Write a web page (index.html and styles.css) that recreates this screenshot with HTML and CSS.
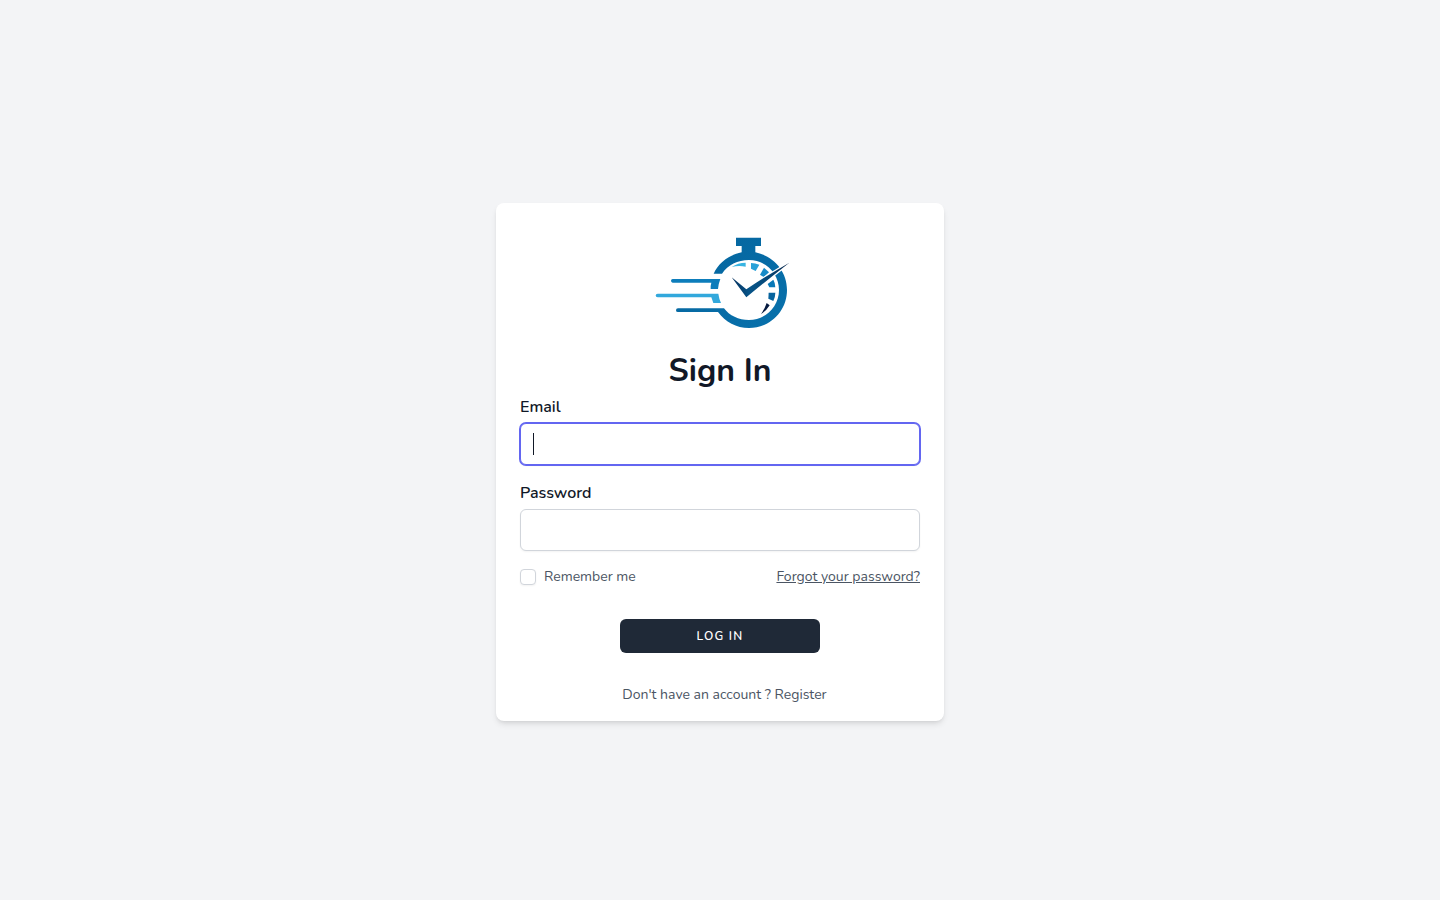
FILE: index.html
```html
<!DOCTYPE html>
<html lang="en">
<head>
<meta charset="utf-8">
<meta name="viewport" content="width=device-width, initial-scale=1">
<title>Sign In</title>
<link rel="stylesheet" href="styles.css">
</head>
<body>
<main class="page">
  <section class="card">
    <svg class="logo" viewBox="0 0 435 315" role="img" aria-label="Stopwatch logo">
      <defs>
        <linearGradient id="ring" x1="0" y1="0" x2="1" y2="1">
          <stop offset="0" stop-color="#04649d"/>
          <stop offset="1" stop-color="#0871ac"/>
        </linearGradient>
        <linearGradient id="check" x1="0" y1="0" x2="1" y2="0">
          <stop offset="0" stop-color="#062f5c"/>
          <stop offset=".3" stop-color="#075488"/>
          <stop offset=".65" stop-color="#064777"/>
          <stop offset="1" stop-color="#0b2447"/>
        </linearGradient>
      </defs>
      <path fill="url(#ring)" d="M258 23H333V48H316V67C371 78 411 124 411 180C411 244 360 294 297 294C259 294 226 276 204 246H84Q78 246 78 240.500Q78 235 84 235H222C238 257 266 270 297 270C346 270 387 230 387 180C387 130 346 90 297 90C263 90 234 105 216 131H191C206 98 237 75 275 67V48H258Z"/>
      <path fill="#0d7dbb" d="M68 147H211Q206 159 204 177H182Q181 168 184 158H68Q63 158 63 152.500Q63 147 68 147Z"/>
      <path fill="#32a8dc" d="M23 191H205Q207 206 213 219H190L184 202H23Q17 202 17 196.500Q17 191 23 191Z"/>
      <path fill="#38b4e2" d="M245 111Q264 98 287 98V110Q266 106 245 111Z"/>
      <path fill="#28a1d8" d="M303 99Q316 99 328 104L317 123L303 116Z"/>
      <path fill="#178bc8" d="M342 113L357 127L341 141L330 134Z"/>
      <path fill="#0878b7" d="M353 162L370 149Q376 159 376 172H358Z"/>
      <path fill="#07649e" d="M356 188H376Q376 201 370 213L355 206Z"/>
      <path fill="#061a40" d="M350 219L359 226Q349 243 333 252Q345 235 350 219Z"/>
      <path fill="none" stroke="#fff" stroke-width="9" d="M289 178Q350 139 418 98Q355 147 289 202"/>
      <path fill="url(#check)" d="M245 142L289 178Q350 137 418 98Q355 147 289 202Z"/>
    </svg>
    <h1 class="title">Sign In</h1>
    <form class="form">
      <div class="field">
        <label class="label" for="email">Email</label>
        <input class="input" id="email" type="email" autocomplete="username" autofocus>
      </div>
      <div class="field">
        <label class="label" for="password">Password</label>
        <input class="input" id="password" type="password" autocomplete="current-password">
      </div>
      <div class="options">
        <label class="remember" for="remember"><input class="checkbox" id="remember" type="checkbox">Remember me</label>
        <a class="forgot" href="#">Forgot your password?</a>
      </div>
      <button class="submit" type="submit">LOG IN</button>
    </form>
    <p class="signup">Don't have an account ? <a class="register" href="#">Register</a></p>
  </section>
</main>
</body>
</html>
```
FILE: styles.css
```css
* {
  box-sizing: border-box;
}

body {
  margin: 0;
  background: #f3f4f6;
  color: #111827;
  font-family: Nunito, Lato, sans-serif;
  font-size: 16px;
  line-height: 24px;
  -webkit-font-smoothing: antialiased;
}

.page {
  display: flex;
  justify-content: center;
  align-items: center;
  min-height: 100vh;
  padding-top: 24px;
}

.card {
  display: flex;
  flex-direction: column;
  width: 100%;
  max-width: 448px;
  padding: 16px 24px;
  background: #fff;
  border-radius: 8px;
  box-shadow: 0 4px 6px -1px rgb(0 0 0 / 10%), 0 2px 4px -2px rgb(0 0 0 / 10%);
}

.logo {
  align-self: center;
  width: 145px;
  margin: 11px 0 12px 5px;
}

.title {
  margin: 0;
  font-size: 32px;
  font-weight: 700;
  line-height: 48px;
  text-align: center;
}

.form {
  display: flex;
  flex-direction: column;
  gap: 16px;
}

.field {
  display: flex;
  flex-direction: column;
  gap: 4px;
}

.label {
  font-weight: 600;
}

.input {
  width: 100%;
  height: 42px;
  padding: 8px 12px;
  border: 1px solid #d1d5db;
  border-radius: 6px;
  background: #fff;
  color: inherit;
  font: inherit;
  box-shadow: 0 1px 2px rgb(0 0 0 / 5%);
}

.input:focus {
  outline: none;
  border-color: #6366f1;
  box-shadow: 0 0 0 1px #6366f1, 0 1px 2px rgb(0 0 0 / 5%);
  background: linear-gradient(#111827, #111827) left center / 1px 22px no-repeat content-box border-box #fff;
  caret-color: transparent;
}

.options {
  display: flex;
  justify-content: space-between;
  color: #4b5563;
  font-size: 14px;
  line-height: 20px;
}

.remember {
  display: flex;
  align-items: center;
  gap: 8px;
}

.checkbox {
  appearance: none;
  width: 16px;
  height: 16px;
  margin: 0;
  border: 1px solid #d1d5db;
  border-radius: 4px;
  background: #fff;
  box-shadow: 0 1px 2px rgb(0 0 0 / 5%);
}

.checkbox:checked {
  background: #4f46e5;
}

.forgot {
  color: inherit;
}

.submit {
  align-self: center;
  width: 200px;
  margin-top: 16px;
  padding: 9px 16px;
  border: 0;
  border-radius: 6px;
  background: #1f2937;
  color: #fff;
  font: inherit;
  font-size: 12px;
  font-weight: 600;
  line-height: 16px;
  letter-spacing: 0.1em;
}

.signup {
  margin: 32px 0 0 9px;
  color: #4b5563;
  font-size: 14px;
  line-height: 20px;
  text-align: center;
}

.register {
  color: inherit;
  text-decoration: none;
}
```
